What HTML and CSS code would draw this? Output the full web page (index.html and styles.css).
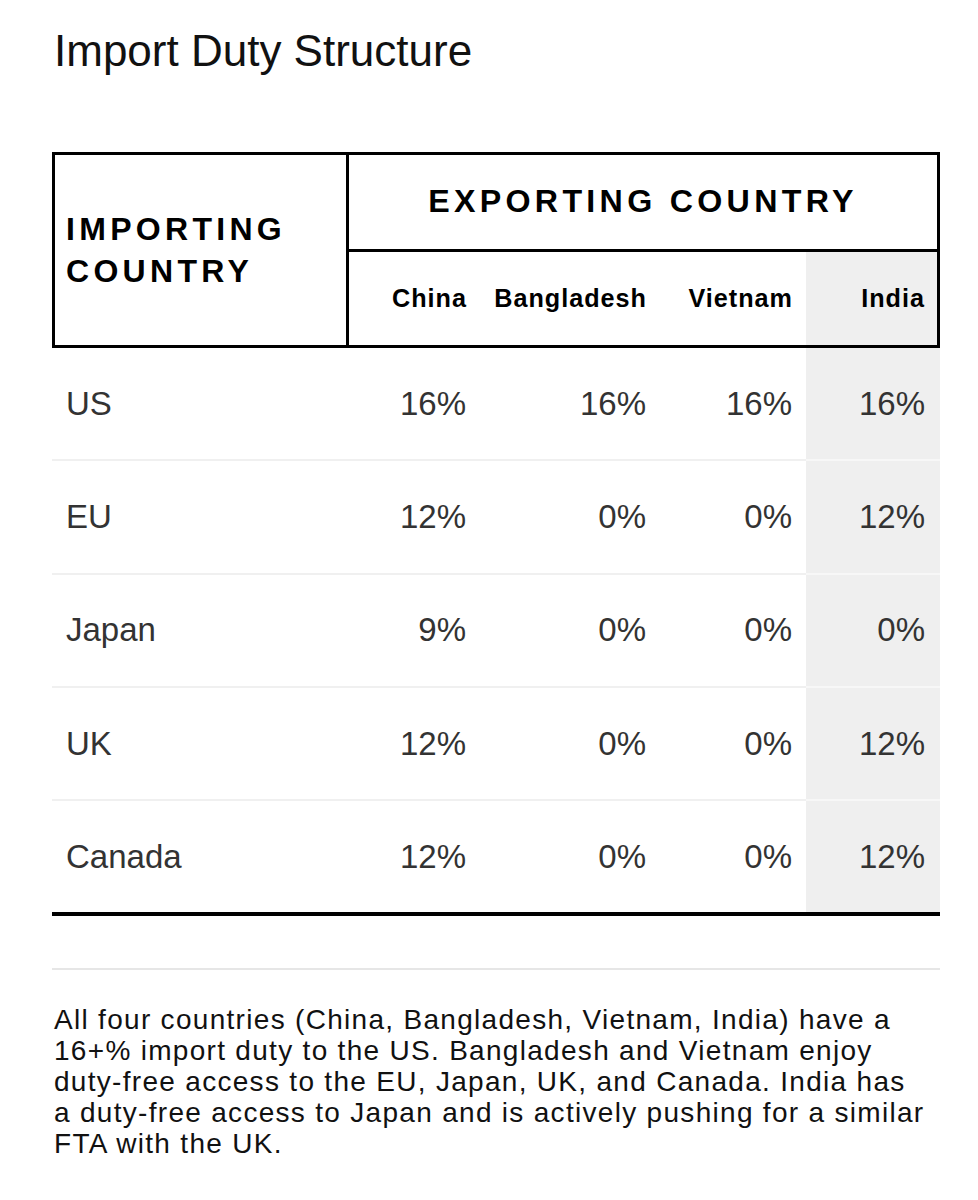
FILE: index.html
```html
<!DOCTYPE html>
<html>
<head>
<meta charset="utf-8">
<link rel="stylesheet" href="styles.css">
</head>
<body>
<div class="page">
  <h1 class="title">Import Duty Structure</h1>
  <table class="duty">
    <colgroup>
      <col class="c-imp">
      <col class="c-china">
      <col class="c-bang">
      <col class="c-viet">
      <col class="c-india">
    </colgroup>
    <thead>
      <tr class="hrow1">
        <th rowspan="2" class="imp">IMPORTING<br>COUNTRY</th>
        <th colspan="4" class="exp">EXPORTING COUNTRY</th>
      </tr>
      <tr class="hrow2">
        <th class="sub">China</th>
        <th class="sub">Bangladesh</th>
        <th class="sub">Vietnam</th>
        <th class="sub hl last">India</th>
      </tr>
    </thead>
    <tbody>
      <tr><td class="name">US</td><td>16%</td><td>16%</td><td>16%</td><td class="hl">16%</td></tr>
      <tr><td class="name">EU</td><td>12%</td><td>0%</td><td>0%</td><td class="hl">12%</td></tr>
      <tr><td class="name">Japan</td><td>9%</td><td>0%</td><td>0%</td><td class="hl">0%</td></tr>
      <tr><td class="name">UK</td><td>12%</td><td>0%</td><td>0%</td><td class="hl">12%</td></tr>
      <tr class="lastrow"><td class="name">Canada</td><td>12%</td><td>0%</td><td>0%</td><td class="hl">12%</td></tr>
    </tbody>
  </table>
  <div class="rule"></div>
  <p class="note">All four countries (China, Bangladesh, Vietnam, India) have a<br>16+% import duty to the US. Bangladesh and Vietnam enjoy<br>duty-free access to the EU, Japan, UK, and Canada. India has<br>a duty-free access to Japan and is actively pushing for a similar<br>FTA with the UK.</p>
</div>
</body>
</html>
```

FILE: styles.css
```css
html, body {
  margin: 0;
  padding: 0;
  background: #ffffff;
}
.page {
  font-family: "Liberation Sans", Arial, sans-serif;
  color: #111;
  padding: 0 38px 0 52px;
}
.title {
  margin: 0;
  padding: 27px 0 0 2px;
  font-size: 44px;
  font-weight: 400;
  line-height: 48px;
  color: #111;
}
.duty {
  margin-top: 77px;
  width: 888px;
  table-layout: fixed;
  border-collapse: separate;
  border-spacing: 0;
}
.c-imp { width: 297px; }
.c-china { width: 131px; }
.c-bang { width: 180px; }
.c-viet { width: 146px; }
.c-india { width: 134px; }

.duty th {
  padding: 0;
  color: #000;
  font-weight: 700;
}
.imp {
  border: 3px solid #000;
  text-align: left;
  vertical-align: middle;
  padding-left: 11px !important;
  font-size: 32px;
  letter-spacing: 4.3px;
  line-height: 42px;
}
.exp {
  border-top: 3px solid #000;
  border-right: 3px solid #000;
  border-bottom: 3px solid #000;
  height: 92px;
  font-size: 32.2px;
  letter-spacing: 4.3px;
  text-align: center;
  vertical-align: middle;
  padding-bottom: 2px !important;
}
.hrow2 th {
  height: 93px;
}
.sub {
  text-align: right;
  font-size: 25.2px;
  letter-spacing: 1px;
  padding-right: 13px !important;
  border-bottom: 3px solid #000;
  vertical-align: middle;
}
.sub.last {
  border-right: 3px solid #000;
  padding-right: 12px !important;
}
.hl {
  background: #efefef;
}
.duty td {
  height: 111.3px;
  padding: 0 14px 0 0;
  text-align: right;
  vertical-align: middle;
  font-size: 33px;
  color: #333;
  border-bottom: 2px solid #f0f0f0;
}
.duty td.hl {
  border-bottom-color: #f7f7f7;
  padding-right: 15px;
}
.duty td.name {
  text-align: left;
  padding-left: 14px;
}
.duty tr.lastrow td {
  border-bottom: 4px solid #000;
}
.rule {
  width: 888px;
  height: 0;
  border-top: 2px solid #e6e6e6;
  margin-top: 52px;
}
.note {
  margin: 34px 0 0 2px;
  width: 900px;
  font-size: 28px;
  letter-spacing: 1.3px;
  line-height: 31px;
  color: #111;
}
```
